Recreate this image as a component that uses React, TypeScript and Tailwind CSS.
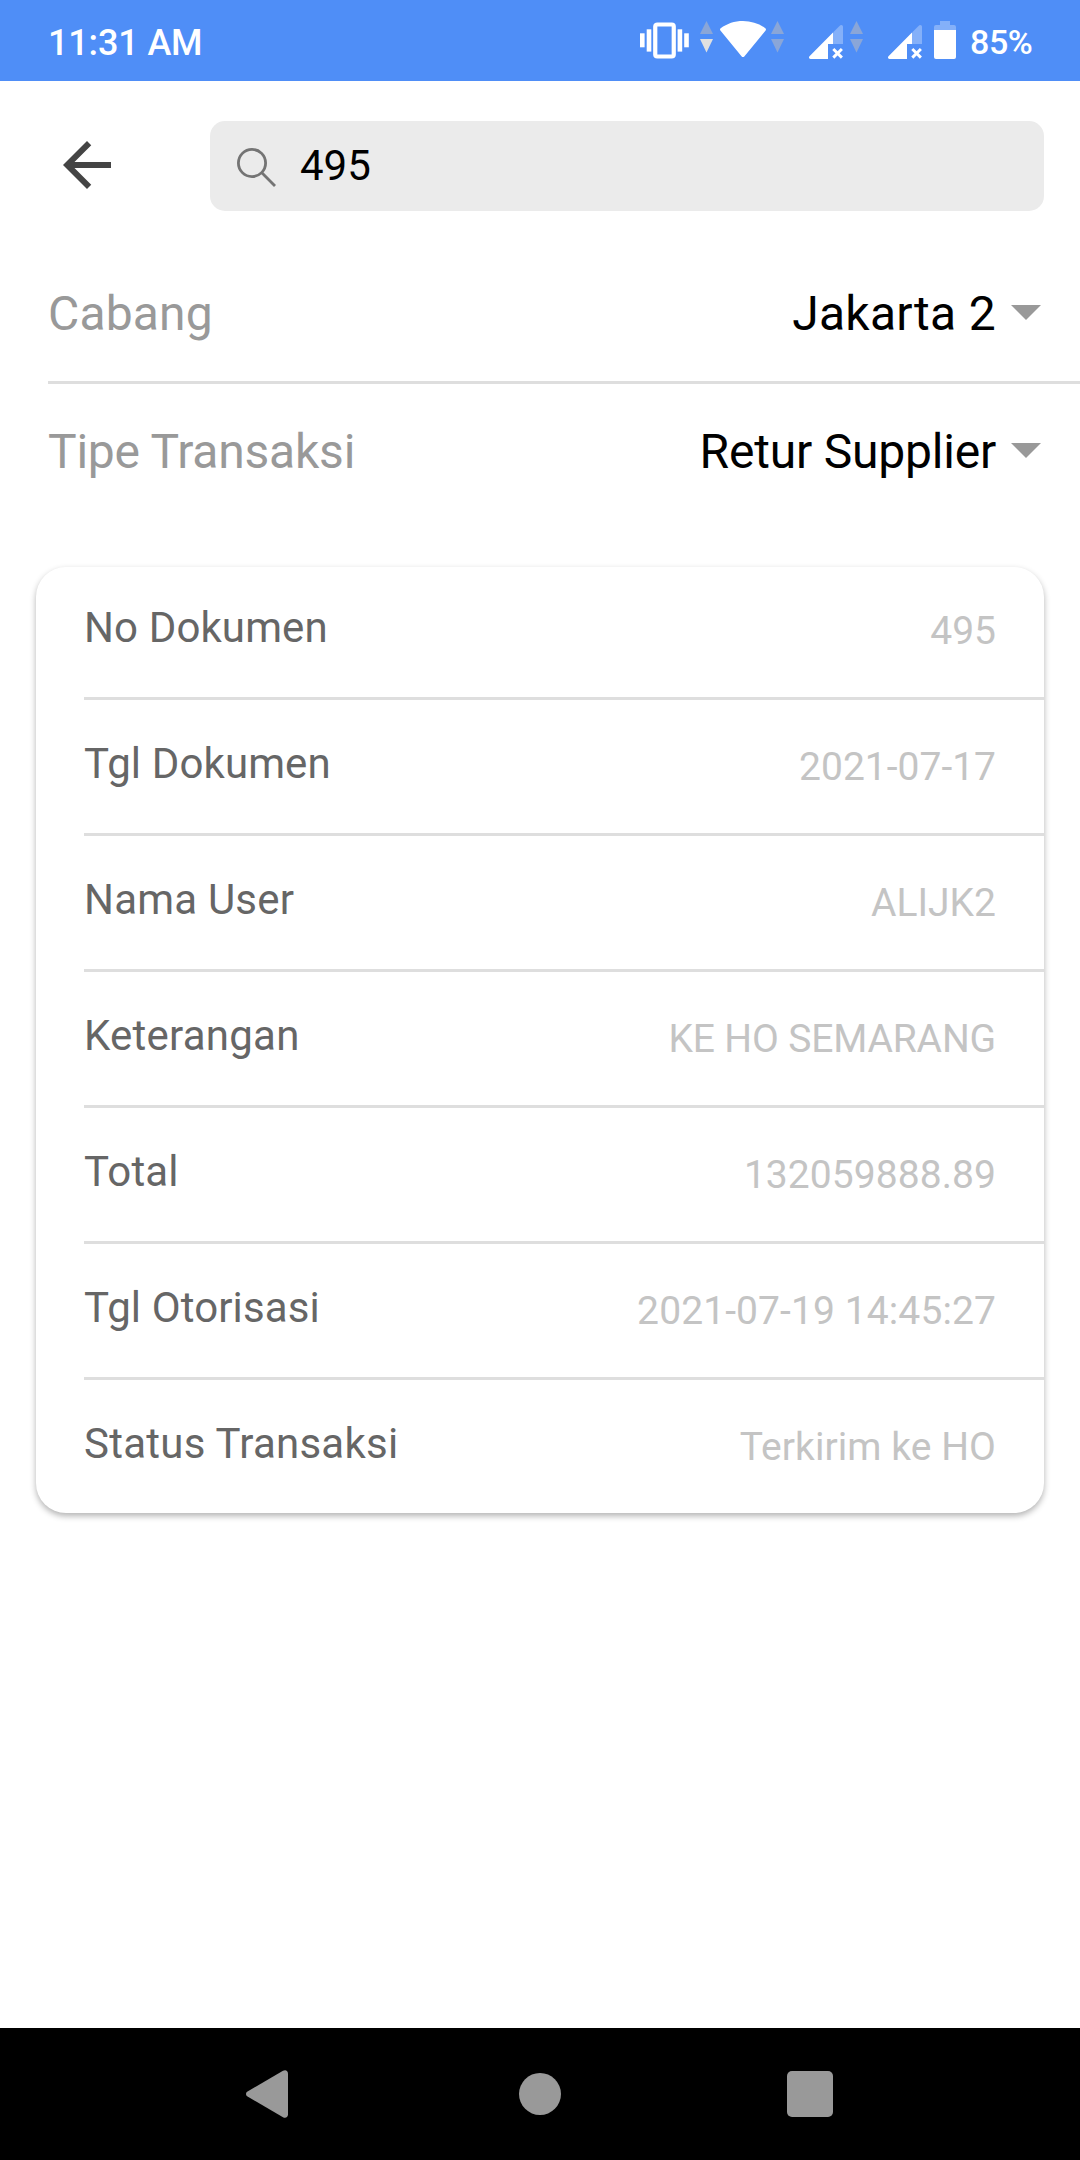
const details = [
  { label: "No Dokumen", value: "495", labelTracking: "tracking-[0.12px]", valueTracking: "tracking-normal" },
  { label: "Tgl Dokumen", value: "2021-07-17", labelTracking: "tracking-[0.12px]", valueTracking: "tracking-normal" },
  { label: "Nama User", value: "ALIJK2", labelTracking: "tracking-[0.2px]", valueTracking: "tracking-normal" },
  { label: "Keterangan", value: "KE HO SEMARANG", labelTracking: "tracking-[0.24px]", valueTracking: "tracking-[-0.15px]" },
  { label: "Total", value: "132059888.89", labelTracking: "tracking-[0.2px]", valueTracking: "tracking-[0.06px]" },
  { label: "Tgl Otorisasi", value: "2021-07-19 14:45:27", labelTracking: "tracking-[0.12px]", valueTracking: "tracking-[0.1px]" },
  { label: "Status Transaksi", value: "Terkirim ke HO", labelTracking: "tracking-[0.25px]", valueTracking: "tracking-[0.06px]" },
];

function VibrateIcon() {
  return (
    <svg width="49" height="37" viewBox="0 0 49 37" fill="none" className="mt-[22px]">
      <rect x="15.25" y="2.5" width="18.5" height="32" rx="2" stroke="#fff" strokeWidth="4.2" />
      <g fill="#fff">
        <rect x="0" y="11.3" width="4.6" height="14" />
        <rect x="6.7" y="7.3" width="4.6" height="22.3" />
        <rect x="37.6" y="7.3" width="4.6" height="22.3" />
        <rect x="44.2" y="11.3" width="4.6" height="14" />
      </g>
    </svg>
  );
}

function TrafficArrows({ down = "#8aa6d8" }: { down?: string }) {
  return (
    <svg width="13" height="32" viewBox="0 0 13 32" className="mt-[21px]">
      <path d="M6.5 0 13 13H0z" fill="#8aa6d8" />
      <path d="M6.5 31.5 13 18H0z" fill={down} />
    </svg>
  );
}

function WifiIcon() {
  return (
    <svg width="46" height="37" viewBox="0 0 46 37" className="mt-[21px]">
      <path
        d="M.7 7.2C7 2.6 14.5 0 23 0s16 2.6 22.3 7.2c.8.6.9 1.6.3 2.4L24.3 35.400c-.7.9-1.9.9-2.6 0L.4 9.6c-.6-.8-.5-1.8.3-2.4z"
        fill="#fff"
      />
    </svg>
  );
}

function SignalIcon() {
  return (
    <svg width="35" height="34" viewBox="0 0 35 34" className="mt-[25px]">
      <path d="M24 7.5 30.5.9C32-.6 34 0 34 2v17H24z" fill="#84b0f9" />
      <path d="M24 7.5V19h-5v15H1.500C0 34-.5 32.500.5 31.300z" fill="#fff" />
      <path d="m24.3 24 8.6 8.6m0-8.6-8.6 8.6" stroke="#fff" strokeWidth="2.9" />
    </svg>
  );
}

function BatteryIcon() {
  return (
    <svg width="22" height="38" viewBox="0 0 22 38" className="mt-[21px]">
      <path d="M6 0h10v4h4a2 2 0 0 1 2 2v3H0V6a2 2 0 0 1 2-2h4z" fill="#84b0f9" />
      <path d="M0 9h22v27a2 2 0 0 1-2 2H2a2 2 0 0 1-2-2z" fill="#fff" />
    </svg>
  );
}

function StatusBar() {
  return (
    <header className="flex h-[81px] items-start bg-[#4f8ef7] pl-12 font-medium text-white">
      <span className="mt-[22px] w-[592px] text-[36px] leading-[42px] tracking-[-0.15px]">11:31 AM</span>
      <VibrateIcon />
      <div className="ml-[11px] flex">
        <TrafficArrows down="#e0e0e0" />
      </div>
      <div className="ml-[7px] flex">
        <WifiIcon />
      </div>
      <div className="ml-[5px] flex">
        <TrafficArrows />
      </div>
      <div className="ml-[25px] flex">
        <SignalIcon />
      </div>
      <div className="ml-[6px] flex">
        <TrafficArrows />
      </div>
      <div className="ml-[25px] flex">
        <SignalIcon />
      </div>
      <div className="ml-[11px] flex">
        <BatteryIcon />
      </div>
      <span className="mt-[22px] ml-[14px] text-[34px] leading-[40px] tracking-[-0.4px]">85%</span>
    </header>
  );
}

function Picker({
  label,
  value,
  labelTracking,
  valueTracking,
}: {
  label: string;
  value: string;
  labelTracking: string;
  valueTracking: string;
}) {
  return (
    <div className="flex h-[135px] items-center pr-[39px] text-[48px] leading-[56px]">
      <span className={`text-[#999999] ${labelTracking}`}>{label}</span>
      <span className={`ml-auto text-black ${valueTracking}`}>{value}</span>
      <svg width="30" height="15" viewBox="0 0 30 15" className="-mt-[2px] ml-[15px]">
        <path d="M0 0h30L15 15z" fill="#999999" />
      </svg>
    </div>
  );
}

export default function App() {
  return (
    <div className="flex h-[2160px] w-[1080px] flex-col bg-white font-['Roboto',sans-serif]">
      <StatusBar />

      <div className="mt-10 flex h-[90px] items-center pr-9 pl-[51px]">
        <svg width="72" height="72" viewBox="0 0 24 24" fill="#444444" className="-mt-[2px]">
          <path d="M20 11H7.830l5.590-5.590L12 4l-8 8 8 8 1.410-1.410L7.830 13H20z" />
        </svg>
        <div className="ml-[87px] flex h-[90px] flex-1 items-center rounded-[15px] bg-[#ebebeb] pl-[27px]">
          <svg width="40" height="40" viewBox="0 0 40 40" fill="none" stroke="#747474" strokeWidth="2.8" className="mt-1">
            <circle cx="15" cy="15" r="13.600" />
            <path d="m24.600 24.600 13.400 13.400" />
          </svg>
          <span className="ml-[23px] text-[42px] leading-[50px] text-black">495</span>
        </div>
      </div>

      <section className="mt-[35px] ml-12">
        <Picker
          label="Cabang"
          value="Jakarta 2"
          labelTracking="tracking-[0.15px]"
          valueTracking="tracking-[0.3px]"
        />
        <div className="h-[3px] bg-[#dedede]" />
        <Picker
          label="Tipe Transaksi"
          value="Retur Supplier"
          labelTracking="tracking-[-0.22px]"
          valueTracking="tracking-[-0.2px]"
        />
      </section>

      <section className="mx-9 mt-[48px] rounded-[30px] bg-white pl-12 shadow-[0_3px_6px_rgba(0,0,0,0.3)]">
        {details.map(({ label, value, labelTracking, valueTracking }) => (
          <div
            key={label}
            className="flex h-[136px] items-start justify-between border-b-[3px] border-[#dedede] pt-[40px] pr-12 first:h-[133px] first:pt-[37px] last:h-[133px] last:border-b-0"
          >
            <span className={`text-[42px] leading-[48px] text-[#666666] ${labelTracking}`}>{label}</span>
            <span className={`mt-[4px] text-[39px] leading-[46px] text-[#c4c4c4] ${valueTracking}`}>{value}</span>
          </div>
        ))}
      </section>

      <nav className="mt-auto flex h-[132px] items-center bg-black">
        <svg width="42" height="48" viewBox="0 0 42 48" className="ml-[246px]">
          <path d="M1.5 21.5 37 .8c2.500-1.400 5 0 5 2.700v41c0 2.700-2.500 4.100-5 2.700L1.5 26.500c-2-1.200-2-3.800 0-5z" fill="#999999" />
        </svg>
        <div className="ml-[231px] size-[42px] rounded-full bg-[#999999]" />
        <div className="ml-[226px] size-[46px] rounded-[5px] bg-[#999999]" />
      </nav>
    </div>
  );
}
